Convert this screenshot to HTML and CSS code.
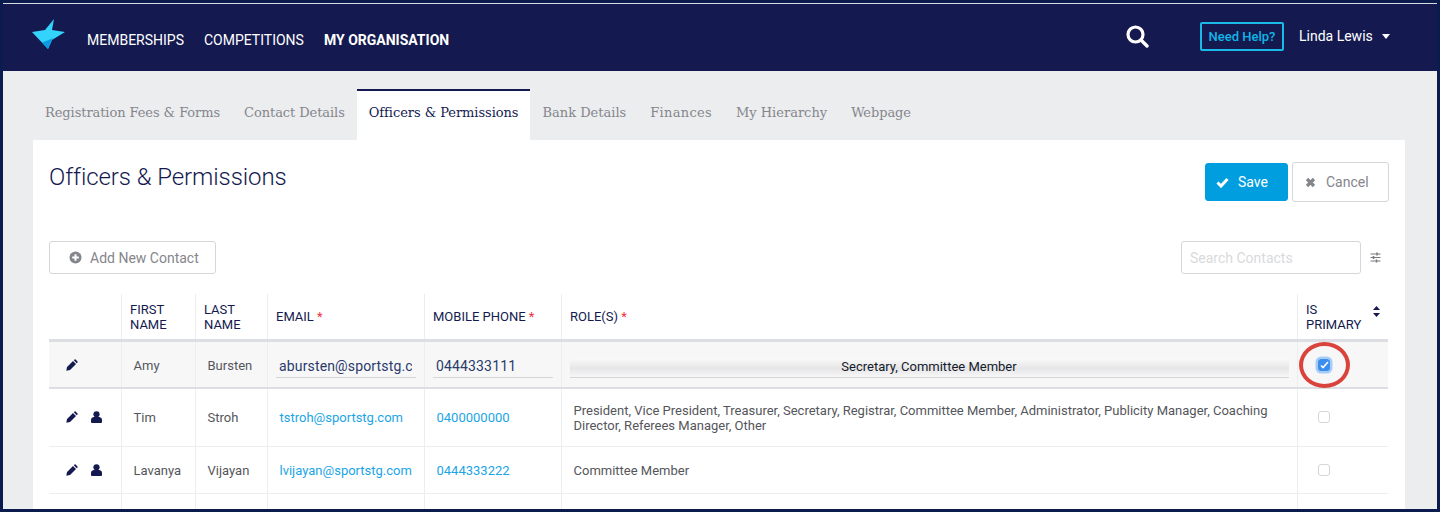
FILE: index.html
```html
<!DOCTYPE html>
<html lang="en">
<head>
<meta charset="utf-8">
<title>Officers &amp; Permissions</title>
<link rel="stylesheet" href="styles.css">
</head>
<body>
<div class="frame">
  <header class="topbar">
    <svg class="logo" width="36" height="32" viewBox="0 0 36 32"><path fill="#34d3fb" d="M0 13 L13 11 L22 0 L20 11 L33 13 L20 21 L16 30 Z"/><path fill="#0b9be3" d="M10 23.600 L22 19 L20 21 L16 30 Z"/></svg>
    <nav class="mainnav">
      <a>MEMBERSHIPS</a><a>COMPETITIONS</a><a class="current">MY ORGANISATION</a>
    </nav>
    <svg class="search" width="24" height="24" viewBox="0 0 24 24"><circle cx="10.500" cy="10.500" r="7.500" fill="none" stroke="#fff" stroke-width="3.200"/><path d="M16 16l6 6" stroke="#fff" stroke-width="3.400" stroke-linecap="round"/></svg>
    <a class="help">Need Help?</a>
    <span class="user">Linda Lewis<i class="caret"></i></span>
  </header>
  <main class="content">
    <div class="tabs">
      <a class="tab">Registration Fees &amp; Forms</a>
      <a class="tab">Contact Details</a>
      <a class="tab active">Officers &amp; Permissions</a>
      <a class="tab">Bank Details</a>
      <a class="tab">Finances</a>
      <a class="tab">My Hierarchy</a>
      <a class="tab">Webpage</a>
    </div>
    <section class="panel">
      <div class="titlebar">
        <h1>Officers &amp; Permissions</h1>
        <div class="actions">
          <button class="btn primary"><svg width="13" height="11" viewBox="0 0 13 11"><path d="M1.500 5.500l3.500 3.500 6.500-7" fill="none" stroke="#fff" stroke-width="3"/></svg>Save</button>
          <button class="btn ghost"><svg width="11" height="11" viewBox="0 0 11 11"><path d="M2 2l7 7M9 2l-7 7" fill="none" stroke="#85868c" stroke-width="3.200"/></svg>Cancel</button>
        </div>
      </div>
      <div class="toolbar">
        <button class="btn add"><svg width="13" height="13" viewBox="0 0 13 13"><circle cx="6.500" cy="6.500" r="6" fill="#85868c"/><path d="M6.500 3.200v6.600M3.200 6.500h6.600" stroke="#fff" stroke-width="2"/></svg>Add New Contact</button>
        <div class="searchgroup">
          <input class="searchbox" placeholder="Search Contacts">
          <svg width="11" height="11" viewBox="0 0 11 11"><path d="M0.500 2h10M0.500 5.500h10M0.500 9h10" stroke="#77787e" stroke-width="1"/><path d="M7 0.500v3M3.500 4v3M6.500 7.500v3" stroke="#77787e" stroke-width="1.500"/></svg>
        </div>
      </div>
      <table class="grid">
        <colgroup><col class="c1"><col class="c2"><col class="c3"><col class="c4"><col class="c5"><col class="c6"><col class="c7"></colgroup>
        <thead>
          <tr><th></th><th>FIRST<br>NAME</th><th>LAST<br>NAME</th><th>EMAIL <em>*</em></th><th>MOBILE PHONE <em>*</em></th><th>ROLE(S) <em>*</em></th><th class="sortable">IS<br>PRIMARY<svg class="sort" width="7" height="11" viewBox="0 0 7 11"><path d="M3.500 0L7 4H0zM3.500 11L0 7h7z" fill="#141a50"/></svg></th></tr>
        </thead>
        <tbody>
          <tr class="editing">
            <td class="icons"><svg class="ic" width="12" height="12" viewBox="0 0 12 12"><path fill="#141a50" d="M0.300 11.700l0.700-3.700 6-6 3 3-6 6zM7.800 1.300l0.800-0.800q0.500-0.400 1 0l1.900 1.900q0.400 0.500 0 1l-0.800 0.800z"/></svg></td>
            <td class="name">Amy</td><td class="name">Bursten</td>
            <td class="field"><input class="inline" value="abursten@sportstg.com"></td>
            <td class="field"><input class="inline" value="0444333111"></td>
            <td class="field"><div class="roles">Secretary, Committee Member</div></td>
            <td class="check">
              <span class="cb on"><svg width="9" height="8" viewBox="0 0 9 8"><path d="M1 4.500l2 2 5-5.500" fill="none" stroke="#fff" stroke-width="1.600"/></svg></span>
              <span class="ring"></span>
            </td>
          </tr>
          <tr class="after-edit">
            <td class="icons"><svg class="ic" width="12" height="12" viewBox="0 0 12 12"><path fill="#141a50" d="M0.300 11.700l0.700-3.700 6-6 3 3-6 6zM7.800 1.300l0.800-0.800q0.500-0.400 1 0l1.900 1.900q0.400 0.500 0 1l-0.800 0.800z"/></svg><svg class="ic" width="11" height="12" viewBox="0 0 11 12"><circle cx="5.500" cy="3.300" r="3.100" fill="#141a50"/><path fill="#141a50" d="M0 11v-2.500q0-2 2.500-2.500h6q2.500 0.500 2.500 2.500V11q0 1-1 1H1q-1 0-1-1z"/></svg></td>
            <td class="name">Tim</td><td class="name">Stroh</td>
            <td class="link">tstroh@sportstg.com</td><td class="link">0400000000</td>
            <td class="role">President, Vice President, Treasurer, Secretary, Registrar, Committee Member, Administrator, Publicity Manager, Coaching Director, Referees Manager, Other</td>
            <td class="check"><span class="cb"></span></td>
          </tr>
          <tr class="third">
            <td class="icons"><svg class="ic" width="12" height="12" viewBox="0 0 12 12"><path fill="#141a50" d="M0.300 11.700l0.700-3.700 6-6 3 3-6 6zM7.800 1.300l0.800-0.800q0.500-0.400 1 0l1.900 1.900q0.400 0.500 0 1l-0.800 0.800z"/></svg><svg class="ic" width="11" height="12" viewBox="0 0 11 12"><circle cx="5.500" cy="3.300" r="3.100" fill="#141a50"/><path fill="#141a50" d="M0 11v-2.500q0-2 2.500-2.500h6q2.500 0.500 2.500 2.500V11q0 1-1 1H1q-1 0-1-1z"/></svg></td>
            <td class="name">Lavanya</td><td class="name">Vijayan</td>
            <td class="link">lvijayan@sportstg.com</td><td class="link">0444333222</td>
            <td class="role">Committee Member</td>
            <td class="check"><span class="cb"></span></td>
          </tr>
          <tr class="stub"><td></td><td></td><td></td><td></td><td></td><td></td><td></td></tr>
        </tbody>
      </table>
    </section>
  </main>
</div>
</body>
</html>
```
FILE: styles.css
```css
* { box-sizing: border-box; }
html, body { margin: 0; height: 512px; overflow: hidden; background: #0c1b4d; }
body { font-family: Roboto, "Liberation Sans", sans-serif; }
.frame { width: 1440px; height: 509px; padding: 3px 3px 0; overflow: hidden; display: flex; flex-direction: column; }
.topbar { flex: 0 0 68px; background: #141a50; border-top: 1px solid #d9dbe4; display: flex; align-items: center; color: #fff; padding: 0 47px 0 29px; position: relative; }
.logo { margin-top: -5px; flex: none; }
.mainnav { display: flex; gap: 20px; margin-left: 19px; font-size: 14px; margin-top: 5px; }
.mainnav .current { font-weight: 700; }
.search { margin-left: auto; margin-top: -3px; flex: none; }
.help { margin-left: 51px; width: 84px; height: 29px; border: 2px solid #1ab9e8; border-radius: 2px; color: #10b5e6; font-size: 13px; font-weight: 500; display: flex; align-items: center; justify-content: center; margin-top: -3px; }
.user { margin-left: 15px; font-size: 14px; margin-top: -3px; display: flex; align-items: center; width: 91px; }
.caret { margin-left: 9px; border: 4px solid transparent; border-top: 5px solid #fff; border-bottom: 0; }
.content { flex: 1; background: #ecedef; padding: 18px 32px 0 30px; min-height: 0; display: flex; flex-direction: column; }
.tabs { display: flex; height: 51px; flex: none; }
.tab { padding: 0 12px; height: 51px; line-height: 43px; font-family: "DejaVu Serif", serif; font-size: 13px; letter-spacing: -0.08px; color: #85868c; border-top: 2px solid transparent; white-space: nowrap; }
.tab.active { background: #fff; color: #141a50; border-top-color: #141a50; letter-spacing: -0.06px; }
.tab:nth-child(4) { letter-spacing: 0; }
.tab:nth-child(5) { letter-spacing: 0.3px; }
.tab:nth-child(6) { letter-spacing: 0; }
.panel { background: #fff; flex: 1; padding: 0 16px; min-height: 0; overflow: hidden; }
.titlebar { display: flex; justify-content: space-between; height: 101px; padding-top: 22px; }
h1 { margin: 0; font-size: 24px; font-weight: 300; color: #141a50; line-height: 31px; letter-spacing: -0.08px; }
.actions { display: flex; gap: 4px; }
.btn { font-family: inherit; font-size: 14px; display: flex; align-items: center; border-radius: 3px; background: #fff; border: 1px solid #d5d6d9; color: #85868c; }
.btn svg { flex: none; }
.primary { width: 83px; height: 38px; background: #009ddf; border-color: #009ddf; color: #fff; padding: 0 0 0 10px; gap: 9px; margin-top: 1px; }
.ghost { width: 97px; height: 40px; padding: 0 0 0 12px; gap: 10px; }
.toolbar { display: flex; justify-content: space-between; align-items: flex-start; height: 53px; }
.add { width: 167px; height: 33px; padding: 0 0 0 19px; gap: 8px; }
.searchgroup { display: flex; align-items: center; gap: 9px; margin-right: 8px; height: 33px; }
.searchbox { width: 180px; height: 33px; border: 1px solid #d5d6d9; border-radius: 3px; padding: 0 8px; font: 14px Roboto, sans-serif; outline: 0; }
.searchbox::placeholder { color: #d9dadc; opacity: 1; }
.grid { width: 1339px; border-collapse: collapse; table-layout: fixed; font-size: 13px; color: #55565b; }
.c1 { width: 72px; } .c2 { width: 74px; } .c3 { width: 72px; } .c4 { width: 157px; } .c5 { width: 137px; } .c6 { width: 736px; } .c7 { width: 91px; }
th, td { border-left: 1px solid #eceded; padding: 0 8px; }
th:first-child, td:first-child { border-left: 0; }
th { height: 46px; text-align: left; font-weight: 400; color: #141a50; line-height: 15px; font-size: 13px; position: relative; border-bottom: 3px solid #dcdee3; padding-top: 1px; padding-left: 8.500px; }
th em { color: #f0313c; font-style: normal; }
.sort { position: absolute; right: 8px; top: 12px; }
td { vertical-align: middle; }
.editing td { height: 48px; background: #f7f7f8; border-bottom: 2px solid #dcdee3; }
.after-edit td { height: 58px; border-bottom: 1px solid #eceded; }
.third td { height: 47px; border-bottom: 1px solid #eceded; }
.stub td { height: 30px; }
.icons { text-align: left; padding: 0 0 0 17px; font-size: 0; }
.ic { margin-right: 13px; vertical-align: middle; }
.name { padding-left: 12px; }
.link { color: #1ba5e5; padding-left: 12px; }
.role { padding-left: 12px; padding-right: 20px; padding-top: 2px; line-height: 15px; }
.third .name, .third .link { padding-top: 2px; }
.editing .name, .editing .icons { padding-top: 2px; }
.inline { width: 100%; height: 22px; border: 0; border-bottom: 1px solid #d5d6d9; background: transparent; padding: 0 3.500px; font: 14px Roboto, sans-serif; color: #2a3a6a; letter-spacing: 0.15px; outline: 0; display: block; margin-top: 5px; }
.roles { height: 20px; margin: 7px 0 0; text-align: center; line-height: 18px; color: #141a2a; font-size: 13px; border-bottom: 1px solid #d5d6d9; background: linear-gradient(#fafafa, #e6e6e8 55%, #f7f7f8); }
.check { text-align: center; position: relative; padding: 0 37px 0 0; }
.after-edit .check, .third .check { padding-bottom: 2px; }
.cb { display: inline-flex; width: 12px; height: 12px; align-items: center; justify-content: center; border: 1px solid #d5d6d9; border-radius: 3px; vertical-align: middle; background: #fff; }
.cb.on { background: #3b8dee; border-color: #3b8dee; box-shadow: 0 0 0 2.500px #a8ccf8; }
.ring { position: absolute; left: 1px; top: 0; width: 51px; height: 46px; border: 4px solid #d9433c; border-radius: 50%; }
```
